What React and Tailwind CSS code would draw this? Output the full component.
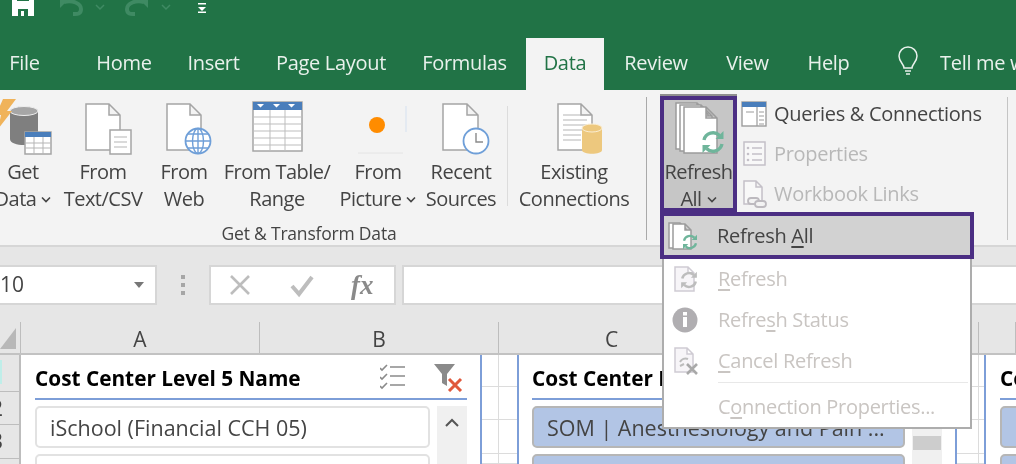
import { Fragment } from "react";

const font = "font-['Open_Sans','Noto_Sans',sans-serif]";

const Chevron = ({ color = "#444" }) => (
  <svg width="10" height="7" viewBox="0 0 10 7" className="inline-block ml-[5px] mb-[2px]">
    <path d="M1 1.5l4 4 4-4" fill="none" stroke={color} strokeWidth="1.6" />
  </svg>
);

const Sync = ({ cx, cy, r, color }) => (
  <g transform={`translate(${cx} ${cy}) scale(${r / 12})`} fill="none" stroke={color} strokeWidth="3.4">
    <path d="M-9 -2a9.2 9.2 0 0 1 15.5 -4.5" />
    <path d="M9 2a9.2 9.2 0 0 1 -15.5 4.5" />
    <path d="M10.5 -11v8h-8z" fill={color} stroke="none" />
    <path d="M-10.5 11v-8h8z" fill={color} stroke="none" />
  </g>
);

const Doc = ({ x, y, w, h, fold = 11, stroke = "#a5a5a5", fill = "#fff" }) => (
  <path
    d={`M${x} ${y}h${w - fold}l${fold} ${fold}v${h - fold}h-${w}zM${x + w - fold} ${y}v${fold}h${fold}`}
    fill={fill}
    stroke={stroke}
    strokeWidth="1.5"
  />
);

const GetDataIcon = () => (
  <svg width="70" height="60" viewBox="0 0 70 60">
    <path d="M22 13v28c0 8 28 8 28 0V13z" fill="#7f7f7f" />
    <ellipse cx="36" cy="13" rx="14" ry="4.5" fill="#a6a6a6" stroke="#eee" strokeWidth="1" />
    <path d="M15 1h13L19 13h5L10 31l3-14H8z" fill="#f0b35a" />
    <rect x="37" y="34" width="26" height="22" fill="#fff" stroke="#a5a5a5" strokeWidth="1.5" />
    <rect x="37" y="34" width="26" height="5" fill="#4a7ebb" />
    <path d="M37 45h26M37 50h26M46 39v17M55 39v17" stroke="#b5b5b5" strokeWidth="1" />
  </svg>
);

const TextCsvIcon = () => (
  <svg width="90" height="60" viewBox="0 0 90 60">
    <Doc x={28} y={6} w={34} h={46} />
    <rect x="52" y="32" width="21" height="24" fill="#fff" stroke="#a5a5a5" strokeWidth="1.5" />
    <path d="M56 39h13M56 44h13M56 49h13" stroke="#b5b5b5" strokeWidth="1" />
  </svg>
);

const WebIcon = () => (
  <svg width="72" height="60" viewBox="0 0 72 60">
    <Doc x={19} y={6} w={34} h={46} />
    <circle cx="50" cy="43" r="12.5" fill="#fff" stroke="#6f9fd8" strokeWidth="1.8" />
    <ellipse cx="50" cy="43" rx="5.5" ry="12.5" fill="none" stroke="#6f9fd8" strokeWidth="1.4" />
    <path d="M38 43h24M40 36h20M40 50h20M50 31v24" stroke="#6f9fd8" strokeWidth="1.4" />
  </svg>
);

const TableIcon = () => (
  <svg width="114" height="60" viewBox="0 0 114 60">
    <rect x="33" y="4" width="49" height="49" fill="#fff" stroke="#a5a5a5" strokeWidth="1.5" />
    <rect x="33" y="4" width="49" height="8" fill="#4a7ebb" />
    <path d="M37 6h7l-3.5 3.5zM53 6h7l-3.5 3.5zM68 6h7l-3.5 3.5z" fill="#fff" />
    <path d="M33 19h49M33 26h49M33 33h49M33 40h49M33 47h49M50 12v41M65 12v41" stroke="#bdbdbd" strokeWidth="1" />
  </svg>
);

const PictureIcon = () => (
  <svg width="88" height="60" viewBox="0 0 88 60">
    <path d="M72 8v26" stroke="#dbe5f1" strokeWidth="1.2" />
    <path d="M24 55h45" stroke="#e4e4e4" strokeWidth="1" />
    <circle cx="43" cy="27" r="8" fill="#ff8c00" />
  </svg>
);

const RecentIcon = () => (
  <svg width="78" height="60" viewBox="0 0 78 60">
    <Doc x={21} y={6} w={35} h={46} />
    <circle cx="54" cy="43" r="12.5" fill="#fff" stroke="#6f9fd8" strokeWidth="1.8" />
    <path d="M54 35v9h7" fill="none" stroke="#8a8a8a" strokeWidth="1.4" />
  </svg>
);

const ExistingIcon = () => (
  <svg width="118" height="60" viewBox="0 0 118 60">
    <Doc x={43} y={6} w={34} h={46} />
    <path d="M48 17h18M48 22h24M48 27h24M48 32h20M48 37h18M48 42h18" stroke="#b5b5b5" strokeWidth="1.2" />
    <path d="M67 30v22c0 5 20 5 20 0V30z" fill="#edc87e" />
    <ellipse cx="77" cy="30" rx="10" ry="4" fill="#edc87e" stroke="#fbeed3" strokeWidth="1" />
  </svg>
);

const RefreshAllIcon = () => (
  <svg width="69" height="58" viewBox="0 0 69 58">
    <Doc x={12} y={3} w={32} h={46} stroke="#9c9c9c" />
    <Doc x={16} y={5} w={32} h={46} stroke="#9c9c9c" />
    <Doc x={20} y={7} w={33} h={46} stroke="#9c9c9c" />
    <Sync cx={49} cy={42} r={12} color="#6fb59b" />
  </svg>
);

const QueriesIcon = () => (
  <svg width="26" height="26" viewBox="0 0 26 26">
    <rect x="1" y="1" width="24" height="24" fill="#fff" stroke="#9c9c9c" strokeWidth="1.4" />
    <rect x="1" y="1" width="24" height="5" fill="#4a7ebb" />
    <path d="M16 6v19M5 11h8M18 11h5M18 15h5M18 19h5M18 23h5" stroke="#9c9c9c" strokeWidth="1.2" />
  </svg>
);

const PropertiesIcon = () => (
  <svg width="26" height="26" viewBox="0 0 26 26">
    <rect x="3" y="1" width="21" height="23" fill="#f8f8f8" stroke="#c4c0c8" strokeWidth="1.5" />
    <path d="M11 7h10M11 13h10M11 19h10" stroke="#c4c0c8" strokeWidth="1.3" />
    <circle cx="7" cy="7" r="1.3" fill="#c4c0c8" />
    <circle cx="7" cy="13" r="1.3" fill="#c4c0c8" />
    <circle cx="7" cy="19" r="1.3" fill="#c4c0c8" />
  </svg>
);

const LinksIcon = () => (
  <svg width="26" height="28" viewBox="0 0 26 28">
    <Doc x={3} y={1} w={18} h={23} fold={6} stroke="#c4c0c8" fill="#f8f8f8" />
    <g fill="#f3f3f3" stroke="#bdbabf" strokeWidth="1.8">
      <rect x="7" y="18" width="11" height="6" rx="3" />
      <rect x="14" y="21" width="11" height="6" rx="3" />
    </g>
  </svg>
);

const ribbonButtons = [
  { key: "get", w: "w-[70px] -ml-[12px]", icon: <GetDataIcon />, lines: ["Get", "Data"], arrow: true },
  { key: "csv", w: "w-[90px]", icon: <TextCsvIcon />, lines: ["From", "Text/CSV"] },
  { key: "web", w: "w-[72px]", icon: <WebIcon />, lines: ["From", "Web"] },
  { key: "table", w: "w-[114px]", icon: <TableIcon />, lines: ["From Table/", "Range"] },
  { key: "pic", w: "w-[88px]", icon: <PictureIcon />, lines: ["From", "Picture"], arrow: true },
  { key: "recent", w: "w-[78px]", icon: <RecentIcon />, lines: ["Recent", "Sources"] },
  { key: "sep" },
  { key: "existing", w: "w-[118px]", icon: <ExistingIcon />, lines: ["Existing", "Connections"] },
];

const RibbonButton = ({ w, icon, lines, arrow }) => (
  <div className={`${w} shrink-0 flex flex-col items-center text-center`}>
    <div className="h-[60px] pb-px">{icon}</div>
    <div className="leading-[27px] whitespace-nowrap">{lines[0]}</div>
    <div className="leading-[27px] whitespace-nowrap">
      {lines[1]}
      {arrow && <Chevron />}
    </div>
  </div>
);

const Ribbon = () => (
  <div className="relative z-10 h-[157px] flex bg-[#f3f3f3] border-b-2 border-[#d6d6d6] text-[#444] text-[20px] tracking-[-0.5px]">
    <div className="w-[646px] shrink-0 pt-[8px] flex flex-col">
      <div className="flex h-[114px] leading-[27px]">
        {ribbonButtons.map((b) =>
          b.key === "sep" ? (
            <div key={b.key} className="w-[15px] shrink-0 flex justify-center pt-[8px] pb-[6px]">
              <div className="w-px bg-[#dcdcdc]" />
            </div>
          ) : (
            <RibbonButton key={b.key} {...b} />
          )
        )}
      </div>
      <div className="w-[642px] -ml-[12px] mt-[8px] text-center text-[17.5px] tracking-[-0.2px] leading-[26px]">Get &amp; Transform Data</div>
    </div>
    <div className="w-px h-[143px] mt-[7px] bg-[#a9a9a9]" />
    <div className="mt-[6px] ml-[13px] h-[116px] w-[77px] shrink-0 border-[4px] border-[#4b2e83] bg-[#c6c6c6] shadow-[0_-2px_0_#8f8f8f] flex flex-col items-center text-center">
      <div className="w-[69px] h-[58px]"><RefreshAllIcon /></div>
      <div className="leading-[27px] whitespace-nowrap">Refresh</div>
      <div className="leading-[27px] whitespace-nowrap">All<Chevron /></div>
    </div>
    <div className="ml-[4px] pt-[11px] flex flex-col gap-[14px] w-[266px] shrink-0 text-[20px] tracking-[-0.3px]">
      <div className="flex items-center h-[26px] gap-[7px]"><QueriesIcon />Queries &amp; Connections</div>
      <div className="flex items-center h-[26px] gap-[7px] text-[#b8b8b8]"><PropertiesIcon />Properties</div>
      <div className="flex items-center h-[26px] gap-[7px] text-[#b8b8b8]"><LinksIcon />Workbook Links</div>
    </div>
    <div className="w-px h-[143px] mt-[7px] bg-[#c4c4c4]" />
  </div>
);

const tabs = [
  { label: "File", w: "w-[49px] mr-[31px]" },
  { label: "Home", w: "w-[88px]" },
  { label: "Insert", w: "w-[91px]" },
  { label: "Page Layout", w: "w-[144px]" },
  { label: "Formulas", w: "w-[123px]" },
  { label: "Data", w: "w-[78px]", active: true },
  { label: "Review", w: "w-[104px]" },
  { label: "View", w: "w-[79px]" },
  { label: "Help", w: "w-[83px]" },
];

const TitleBar = () => (
  <div className="h-[38px] bg-[#217346] flex items-start">
    <svg width="230" height="38" viewBox="0 0 230 38">
      <path d="M12 -8h22v24H12z" fill="#fff" />
      <path d="M17 -8h12v9H17zM18 9h10v7H18z" fill="#217346" />
      <path d="M21 11h3v5h-3z" fill="#fff" />
      <g fill="none" stroke="#3f8a63" strokeWidth="4">
        <path d="M64 2c8-2 17 1 17 7s-5 5-8 5" />
        <path d="M144 2c-8-2-17 1-17 7s5 5 8 5" />
      </g>
      <path d="M60 8V-3h11zM148 8V-3h-11z" fill="#3f8a63" />
      <path d="M96 5l4 4 4-4M162 5l4 4 4-4" fill="none" stroke="#3f8a63" strokeWidth="1.5" />
      <path d="M198 3h8v1.5h-8zM198 7h8l-4 4zM198 11.5h8V13h-8z" fill="#fff" />
    </svg>
  </div>
);

const TabBar = () => (
  <div className="h-[52px] bg-[#217346] flex text-[20px] tracking-[-0.3px] text-[#e9f1ec] overflow-hidden">
    {tabs.map((t) => (
      <div
        key={t.label}
        className={`${t.w} shrink-0 text-center pt-[12px] leading-[26px] ${t.active ? "bg-[#f3f3f3] text-[#217346]" : ""}`}
      >
        {t.label}
      </div>
    ))}
    <svg width="24" height="34" viewBox="0 0 24 34" className="shrink-0 ml-[26px] mt-[8px]">
      <path
        d="M8 22c0-4-5-6-5-12a9 9 0 0 1 18 0c0 6-5 8-5 12zM9 25h6M10 28h4"
        fill="none"
        stroke="#e9f1ec"
        strokeWidth="1.5"
      />
    </svg>
    <div className="ml-[20px] pt-[12px] leading-[26px] whitespace-nowrap">Tell me what you want to do</div>
  </div>
);

const FormulaBar = () => (
  <div className="h-[75px] pt-[18px] pb-[17px] bg-[#e6e6e6] flex">
    <div className="w-[157px] shrink-0 bg-white border-2 border-[#d6d6d6] border-l-0 flex items-center justify-between text-[#444] text-[21px]">
      <span>10</span>
      <svg width="10" height="6" viewBox="0 0 10 6" className="mr-[11px]"><path d="M0 0h10L5 6z" fill="#777" /></svg>
    </div>
    <div className="w-[52px] shrink-0 flex flex-col items-center justify-center gap-[4px]">
      <i className="w-[4px] h-[4px] bg-[#a6a6a6]" />
      <i className="w-[4px] h-[4px] bg-[#a6a6a6]" />
      <i className="w-[4px] h-[4px] bg-[#a6a6a6]" />
    </div>
    <div className="w-[187px] shrink-0 bg-white border-2 border-[#d6d6d6] relative flex items-center">
      <svg width="120" height="36" viewBox="0 0 120 36" className="shrink-0">
        <path d="M20 9l18 18M38 9L20 27" stroke="#bdbdbd" strokeWidth="2.6" />
        <path d="M81 19l7 8 13-17" fill="none" stroke="#bdbdbd" strokeWidth="4" />
      </svg>
      <span className="ml-[20px] font-['Liberation_Serif',serif] italic font-bold text-[#8a8a8a] text-[27px] leading-none">fx</span>
    </div>
    <div className="ml-[6px] flex-1 bg-white border-2 border-r-0 border-[#d6d6d6]" />
  </div>
);

const columns = [
  { label: "A", w: "w-[239px]" },
  { label: "B", w: "w-[239px]" },
  { label: "C", w: "w-[226px]" },
  { label: "", w: "w-[254px]" },
  { label: "", w: "w-[37px]" },
];

const ColumnHeaders = () => (
  <div className="h-[33px] bg-[#e6e6e6] flex border-b-2 border-[#c2c2c2] text-[#444] text-[21px]">
    <div className="w-[21px] shrink-0 border-r border-[#bdbdbd] flex items-end pb-[4px]">
      <svg width="16" height="21" viewBox="0 0 16 21"><path d="M16 0v21H0z" fill="#b8b8b8" /></svg>
    </div>
    {columns.map((c, i) => (
      <div key={i} className={`${c.w} shrink-0 border-r border-[#bdbdbd] text-center leading-[35px]`}>{c.label}</div>
    ))}
  </div>
);

const RowHeaders = () => (
  <div className="w-[21px] shrink-0 bg-[#e6e6e6] border-r-2 border-[#bdbdbd] overflow-hidden text-[#444] text-[21px] leading-[33px]">
    <div className="h-[32px] border-b border-[#bdbdbd]"><div className="w-[2px] h-[24px] mt-[5px] bg-[#bfeee9]" /></div>
    <div className="h-[33px] border-b border-[#bdbdbd] -ml-[9px]">2</div>
    <div className="h-[34px] border-b border-[#bdbdbd] -ml-[9px]">3</div>
  </div>
);

const GapCells = ({ widths }) => (
  <div className="shrink-0 flex flex-col">
    {["h-[32px]", "h-[33px]", "h-[34px]", "h-[10px]"].map((h) => (
      <div key={h} className={`${h} flex border-b border-[#dcdcdc]`}>
        {widths.map((w) => (
          <div key={w} className={`${w} border-r border-[#dcdcdc] last:border-r-0`} />
        ))}
      </div>
    ))}
  </div>
);

const SlicerHeader = ({ title, w, icons }) => (
  <div className={`${w} h-[45px] border-b-2 border-[#7d9ed8] flex items-center justify-between`}>
    <span className="text-[20.8px] font-bold text-black whitespace-nowrap pt-[4px]">{title}</span>
    {icons && (
      <svg width="85" height="30" viewBox="0 0 85 30" className="shrink-0 mr-[2px]">
        <path d="M0 8l2 2 5-5M0 17l2 2 5-5M0 26l2 2 5-5" transform="translate(0 -2)" fill="none" stroke="#8a8a8a" strokeWidth="1.6" />
        <path d="M10 5h15M10 14h15M10 23h15" stroke="#8a8a8a" strokeWidth="1.6" />
        <path d="M54 2h21l-8 10v12l-5-3v-9z" fill="#8a8a8a" />
        <path d="M69 17l12 12M81 17L69 29" stroke="#e0583c" strokeWidth="3" />
      </svg>
    )}
  </div>
);

const Item = ({ w, text, selected }) => (
  <div
    className={`${w} h-[42px] rounded-[5px] border-2 flex items-center pt-[3px] pl-[13px] text-[21.5px] text-[#444] whitespace-nowrap overflow-hidden ${
      selected ? "bg-[#b2c5e5] border-[#b6b6b6]" : "bg-white border-[#e2e2e2]"
    }`}
  >
    {text}
  </div>
);

const Slicers = () => (
  <div className="flex flex-1 h-[109px] overflow-hidden">
    <div className="w-[461px] shrink-0 border-r-2 border-[#7d9ed8] pl-[14px]">
      <SlicerHeader title="Cost Center Level 5 Name" w="w-[432px]" icons />
      <div className="flex gap-[7px] pt-[6px]">
        <div className="flex flex-col gap-[6px]">
          <Item w="w-[395px]" text="iSchool (Financial CCH 05)" />
          <Item w="w-[395px]" text="" />
        </div>
        <div className="w-[30px] h-[60px] bg-[#f0f0f0] flex justify-center pt-[12px]">
          <svg width="14" height="9" viewBox="0 0 14 9"><path d="M1 8l6-6 6 6" fill="none" stroke="#555" strokeWidth="2" /></svg>
        </div>
      </div>
    </div>
    <GapCells widths={["w-[17px]", "w-[18px]"]} />
    <div className="w-[440px] shrink-0 border-x-2 border-[#7d9ed8] pl-[13px]">
      <SlicerHeader title="Cost Center Level 6 Name" w="w-[410px]" />
      <div className="flex gap-[7px] pt-[6px]">
        <div className="flex flex-col gap-[6px]">
          <Item w="w-[373px]" text="SOM | Anesthesiology and Pain ..." selected />
          <Item w="w-[373px]" text="" selected />
        </div>
        <div className="w-[30px] h-[60px] bg-[#f0f0f0] pt-[30px] px-px">
          <div className="h-[14px] bg-[#cdcdcd]" />
        </div>
      </div>
    </div>
    <GapCells widths={["w-[22px]", "w-[5px]"]} />
    <div className="flex-1 min-w-0 border-l-2 border-[#7d9ed8] pl-[14px] overflow-hidden">
      <SlicerHeader title="Cost Center Level 7 Name" w="w-[300px]" />
      <div className="flex flex-col gap-[6px] pt-[6px]">
        <Item w="w-[300px]" text="SOM | Anesthesiology" selected />
        <Item w="w-[300px]" text="" selected />
      </div>
    </div>
  </div>
);

const MenuRefreshAll = () => (
  <svg width="30" height="30" viewBox="0 0 30 30">
    <Doc x={1} y={2} w={17} h={25} fold={6} stroke="#9c9c9c" />
    <Doc x={5} y={3} w={18} h={25} fold={6} stroke="#9c9c9c" />
    <Sync cx={22} cy={21} r={8} color="#6fb59b" />
  </svg>
);

const MenuRefresh = () => (
  <svg width="30" height="28" viewBox="0 0 30 28">
    <Doc x={3} y={2} w={19} h={24} fold={6} stroke="#cfcbd3" fill="#f7f5f8" />
    <Sync cx={17} cy={15} r={9} color="#bdbdbd" />
  </svg>
);

const MenuInfo = () => (
  <svg width="30" height="28" viewBox="0 0 30 28">
    <circle cx="13" cy="14" r="12.5" fill="#b0aeb1" />
    <rect x="11" y="11" width="4" height="10" fill="#fff" />
    <rect x="11" y="6" width="4" height="3.5" fill="#fff" />
  </svg>
);

const MenuCancel = () => (
  <svg width="30" height="28" viewBox="0 0 30 28">
    <Doc x={3} y={1} w={18} h={24} fold={6} stroke="#cfcbd3" fill="#f7f5f8" />
    <path d="M8 15a6 6 0 0 1 8-3M8 19l4-2" fill="none" stroke="#bdbdbd" strokeWidth="2" />
    <path d="M15 17l10 10M25 17L15 27" stroke="#a9a9a9" strokeWidth="2.6" />
  </svg>
);

const menuItems = [
  { icon: <MenuRefresh />, pre: "", key: "R", post: "efresh", h: "h-[41px]" },
  { icon: <MenuInfo />, pre: "Refre", key: "s", post: "h Status", h: "h-[41px]" },
  { icon: <MenuCancel />, pre: "", key: "C", post: "ancel Refresh", h: "h-[42px]" },
];

const RefreshMenu = () => (
  <div className="absolute left-[662px] top-[212px] z-20 w-[310px] h-[217px] bg-white border-2 border-t-0 border-[#adadad] text-[20px] tracking-[-0.3px] text-[#c9c5c2]">
    <div className="-mx-[4px] h-[47px] border-[4.5px] border-[#4b2e83] bg-[#d2d2d2] flex items-center pt-px text-[#444]">
      <div className="w-[53px] pl-[4px] shrink-0"><MenuRefreshAll /></div>
      Refresh&nbsp;<span className="underline underline-offset-[3px]">A</span>ll
    </div>
    {menuItems.map((m) => (
      <div key={m.key} className={`${m.h} flex items-center -mt-px mb-px`}>
        <div className="w-[54px] pl-[8px] shrink-0 flex">{m.icon}</div>
        <span>{m.pre}<span className="underline underline-offset-[3px]">{m.key}</span>{m.post}</span>
      </div>
    ))}
    <div className="ml-[54px] mr-[2px] h-px bg-[#e8e8e8] mt-[-1px]" />
    <div className="h-[48px] pl-[54px] flex items-center">
      C<span className="underline underline-offset-[3px]">o</span>nnection Properties...
    </div>
  </div>
);

const App = () => {
  return (
    <Fragment>
      <div className={`relative w-[1016px] h-[464px] overflow-hidden bg-white ${font} blur-[0.5px]`}>
        <TitleBar />
        <TabBar />
        <Ribbon />
        <FormulaBar />
        <ColumnHeaders />
        <div className="flex">
          <RowHeaders />
          <Slicers />
        </div>
        <RefreshMenu />
      </div>
    </Fragment>
  );
};

export default App;
